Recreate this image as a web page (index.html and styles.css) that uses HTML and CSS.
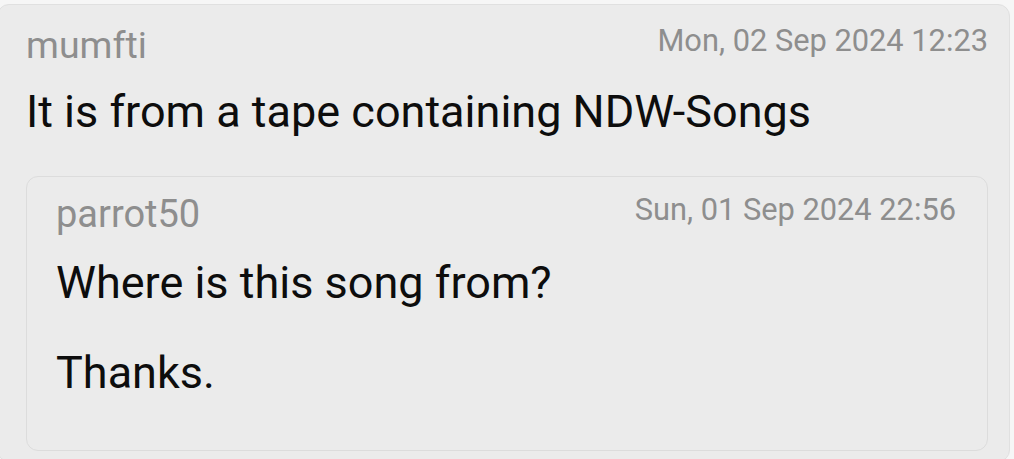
FILE: index.html
```html
<!DOCTYPE html>
<html lang="en">
<head>
<meta charset="utf-8">
<title>Comment</title>
<link rel="stylesheet" href="styles.css">
</head>
<body>
<div class="card">
  <div class="head">
    <span class="author">mumfti</span>
    <span class="date">Mon, 02 Sep 2024 12:23</span>
  </div>
  <p class="text">It is from a tape containing NDW-Songs</p>
  <div class="quote">
    <div class="head">
      <span class="author">parrot50</span>
      <span class="date">Sun, 01 Sep 2024 22:56</span>
    </div>
    <p class="text">Where is this song from?</p>
    <p class="text">Thanks.</p>
  </div>
</div>
</body>
</html>
```
FILE: styles.css
```css
html, body {
  margin: 0;
  padding: 0;
  background: #f6f6f6;
  font-family: Roboto, "Liberation Sans", sans-serif;
}
body {
  height: 459px;
  overflow: hidden;
}
.card {
  margin: 4px 0 0 -3px;
  width: 1013px;
  box-sizing: border-box;
  background: #ebebeb;
  border: 1px solid #e0e0e0;
  border-radius: 12px;
  padding: 18px 21px 10px 28px;
}
.head {
  display: flex;
  justify-content: space-between;
  align-items: flex-start;
  color: #8e8e8e;
}
.author {
  font-size: 37.5px;
  line-height: 44px;
}
.quote .author {
  font-size: 38px;
}
.date {
  font-size: 30.8px;
  line-height: 36px;
}
.text {
  margin: 15px 0 0;
  color: #0d0d0d;
  font-size: 45px;
  line-height: 60px;
}
.quote {
  margin-top: 34px;
  border: 1px solid #dcdcdc;
  border-radius: 12px;
  padding: 15px 31px 47px 29px;
}
.quote .text {
  margin-top: 17px;
}
.quote .text + .text {
  margin-top: 30px;
}
```
